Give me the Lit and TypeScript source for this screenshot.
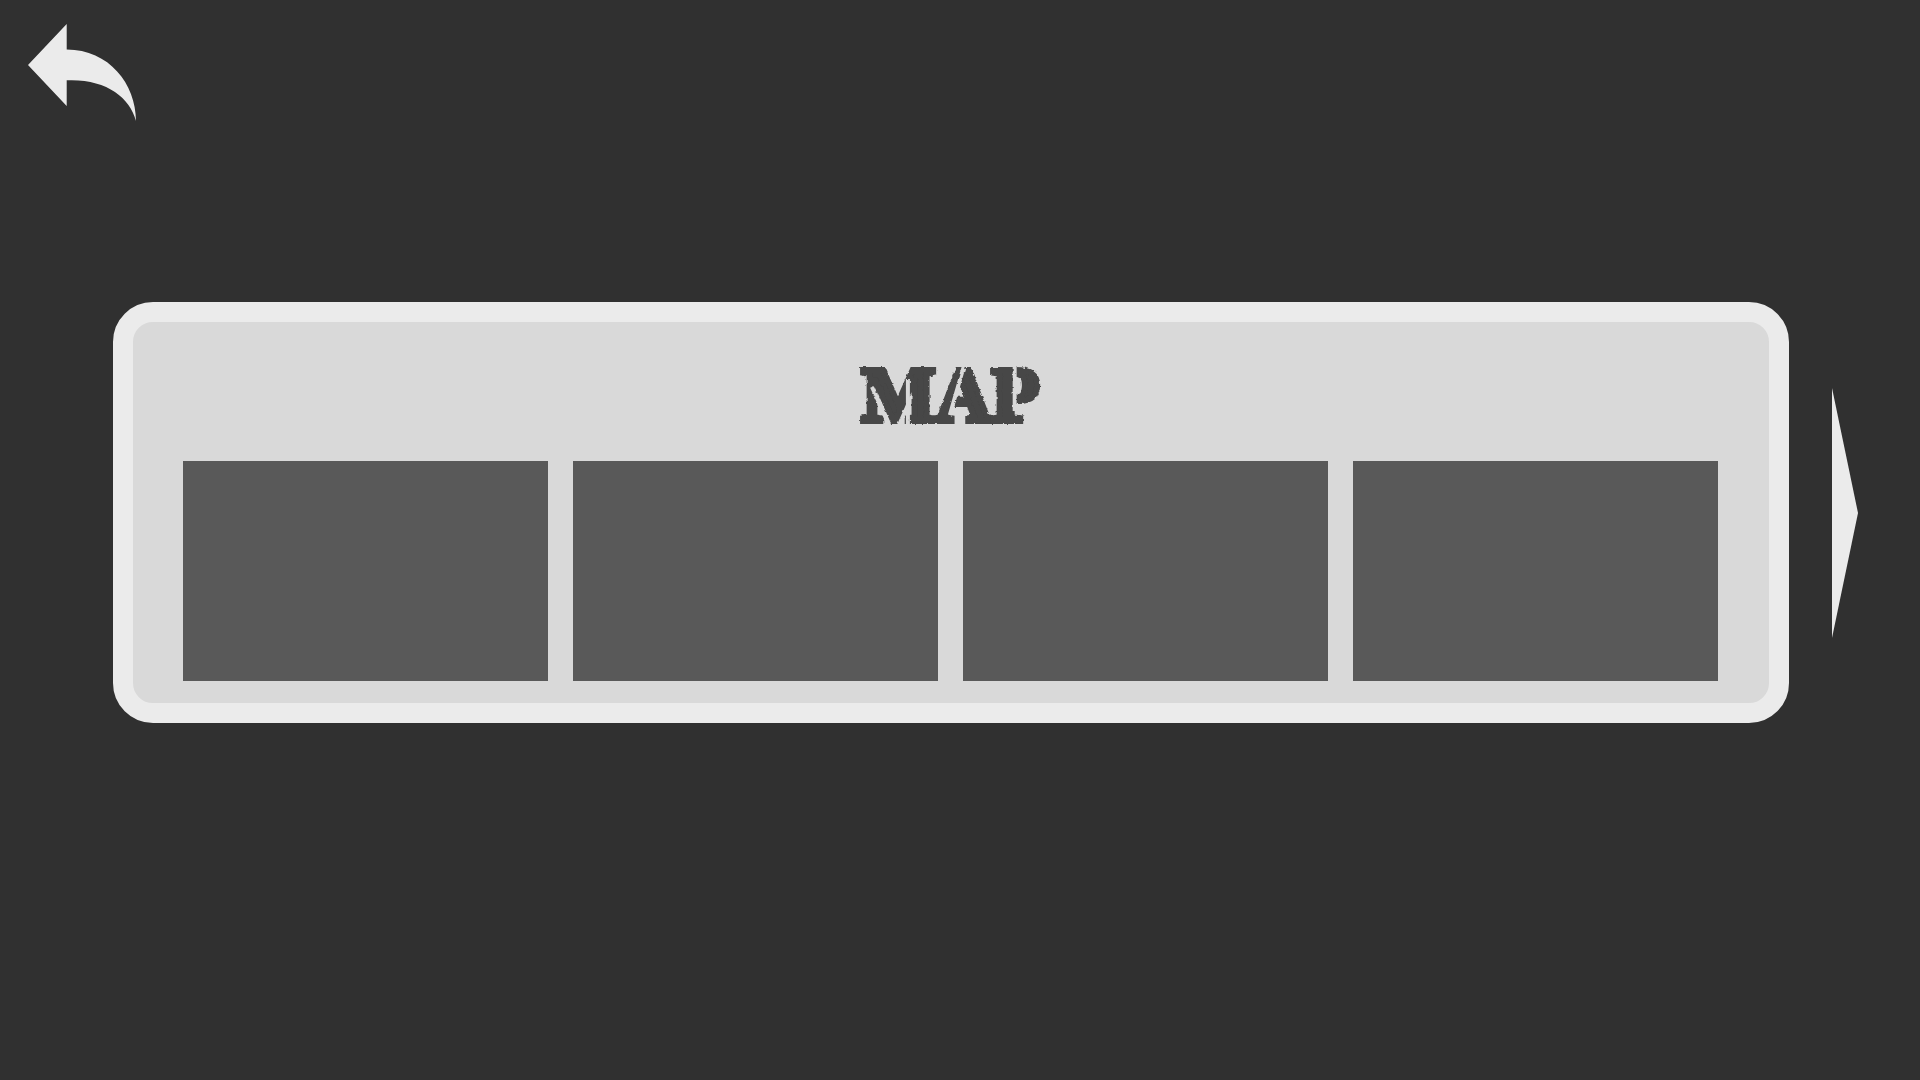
import { LitElement, html, css } from "lit";
import { customElement, state } from "lit/decorators.js";

@customElement("app-root")
class AppRoot extends LitElement {
  @state() private selected = -1;

  static styles = css`
    :host {
      display: block;
      min-height: 100vh;
      background: #303030;
      font-family: "Liberation Serif", "Times New Roman", serif;
    }
    button {
      display: block;
      margin: 0;
      padding: 0;
      border: 0;
      background: none;
      cursor: pointer;
    }
    svg {
      display: block;
    }
    .bar {
      padding: 24px 28px;
    }
    .icon {
      fill: #ebebeb;
    }
    .stage {
      display: grid;
      grid-template-columns: 1fr 131px;
      align-items: center;
      padding: 157px 0 156px 113px;
    }
    .panel {
      padding: 27px 51px 22px 50px;
      border: 20px solid #ebebeb;
      border-radius: 40px;
      background: #d9d9d9;
    }
    .title {
      margin: 0 0 20px;
      font-size: 78px;
      font-weight: 700;
      line-height: 92px;
      text-align: center;
      color: #464646;
      -webkit-text-stroke: 6px #464646;
    }
    .stencil {
      display: inline-block;
      position: relative;
      filter: url(#worn);
    }
    .cuts {
      position: absolute;
      inset: 0;
      width: 100%;
      height: 100%;
      fill: none;
      stroke: #d9d9d9;
      stroke-width: 4;
    }
    .defs {
      position: absolute;
    }
    .maps {
      display: grid;
      grid-template-columns: repeat(4, 1fr);
      gap: 25px;
    }
    .map {
      height: 220px;
      background: #595959;
    }
    .next {
      justify-self: start;
      margin-left: 43px;
    }
  `;

  render() {
    return html`
      <svg class="defs" width="0" height="0" aria-hidden="true">
        <filter id="worn" x="-5%" y="-5%" width="110%" height="110%">
          <feTurbulence type="fractalNoise" baseFrequency="0.25" numOctaves="2" seed="4" result="noise" />
          <feDisplacementMap in="SourceGraphic" in2="noise" scale="3" xChannelSelector="R" yChannelSelector="G" />
        </filter>
      </svg>
      <header class="bar">
        <button aria-label="Back">
          <svg class="icon" width="108" height="97" viewBox="28 24 108 97">
            <path d="M28 65 66.7 24V49.5C109 49.5 136 84 136 121 130 97 105 78.5 66.7 80.3V106Z" />
          </svg>
        </button>
      </header>
      <main class="stage">
        <section class="panel">
          <h1 class="title">
            <span class="stencil">MAP<svg class="cuts" viewBox="0 0 178 92" aria-hidden="true">
                <path d="M10 38 27 76M46 30V78M103 14 88 66M153 14V62" />
              </svg></span>
          </h1>
          <div class="maps">
            ${[0, 1, 2, 3].map(
              (i) => html`<button
                class="map"
                aria-label="Map ${i + 1}"
                aria-pressed=${this.selected === i}
                @click=${() => (this.selected = i)}
              ></button>`
            )}
          </div>
        </section>
        <button class="next" aria-label="Next">
          <svg class="icon" width="26" height="250" viewBox="0 0 26 250">
            <path d="M0 0 26 125 0 250Z" />
          </svg>
        </button>
      </main>
    `;
  }
}
